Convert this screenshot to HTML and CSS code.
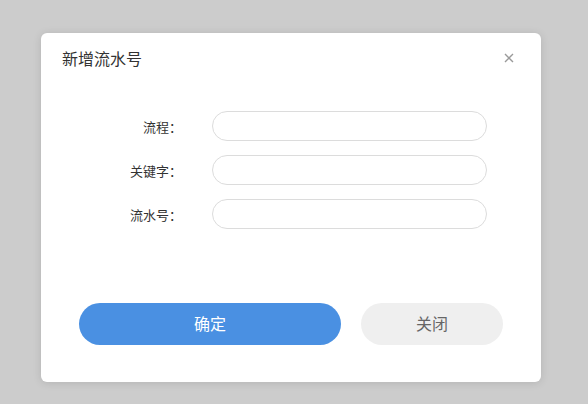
FILE: index.html
```html
<!DOCTYPE html>
<html lang="zh-CN">
<head>
<meta charset="utf-8">
<title>新增流水号</title>
<link rel="stylesheet" href="styles.css">
</head>
<body>
<div class="dialog">
  <div class="dialog-header">
    <span class="dialog-title">新增流水号</span>
    <span class="dialog-close" aria-label="关闭">
      <svg width="10" height="10" viewBox="0 0 10 10"><path d="M1 1L9 9M9 1L1 9" stroke="#9a9a9a" stroke-width="1.4" fill="none"/></svg>
    </span>
  </div>
  <form class="dialog-form">
    <div class="form-row">
      <label class="form-label">流程：</label>
      <input class="form-input" type="text">
    </div>
    <div class="form-row">
      <label class="form-label">关键字：</label>
      <input class="form-input" type="text">
    </div>
    <div class="form-row">
      <label class="form-label">流水号：</label>
      <input class="form-input" type="text">
    </div>
  </form>
  <div class="dialog-actions">
    <button class="btn btn-primary" type="button">确定</button>
    <button class="btn btn-default" type="button">关闭</button>
  </div>
</div>
</body>
</html>
```

FILE: styles.css
```css
html, body {
  margin: 0;
  padding: 0;
}
body {
  background: #cccccc;
  width: 588px;
  height: 404px;
  overflow: hidden;
  font-family: "Noto Sans CJK SC", "Liberation Sans", sans-serif;
  color: #333;
  padding-top: 33px;
  padding-left: 41px;
  box-sizing: border-box;
}
.dialog {
  width: 500px;
  height: 349px;
  background: #fff;
  border-radius: 6px;
  box-shadow: 0 1px 8px rgba(0, 0, 0, 0.12);
  display: flex;
  flex-direction: column;
}
.dialog-header {
  height: 50px;
  display: flex;
  align-items: center;
  justify-content: space-between;
  padding: 0 27px 0 21px;
}
.dialog-title {
  font-size: 16px;
  line-height: 20px;
  color: #333;
}
.dialog-close {
  display: flex;
  width: 10px;
  height: 10px;
  cursor: pointer;
}
.dialog-form {
  margin: 28px 0 0 0;
  display: flex;
  flex-direction: column;
  gap: 14px;
}
.form-row {
  display: flex;
  align-items: center;
  height: 30px;
}
.form-label {
  width: 141px;
  text-align: right;
  font-size: 13px;
  color: #333;
  margin-right: 30px;
}
.form-input {
  width: 275px;
  height: 30px;
  box-sizing: border-box;
  border: 1px solid #dcdcdc;
  border-radius: 15px;
  padding: 0 12px;
  outline: none;
  background: #fff;
  font-family: inherit;
  font-size: 13px;
}
.dialog-actions {
  margin-top: 74px;
  display: flex;
  gap: 20px;
  padding: 0 38px;
}
.btn {
  height: 42px;
  border: none;
  border-radius: 21px;
  font-family: inherit;
  font-size: 16px;
  line-height: 20px;
  padding: 0 0 2px 0;
  cursor: pointer;
}
.btn-primary {
  width: 262px;
  background: #4a90e2;
  color: #fff;
}
.btn-default {
  width: 142px;
  background: #efefef;
  color: #666;
}
```
